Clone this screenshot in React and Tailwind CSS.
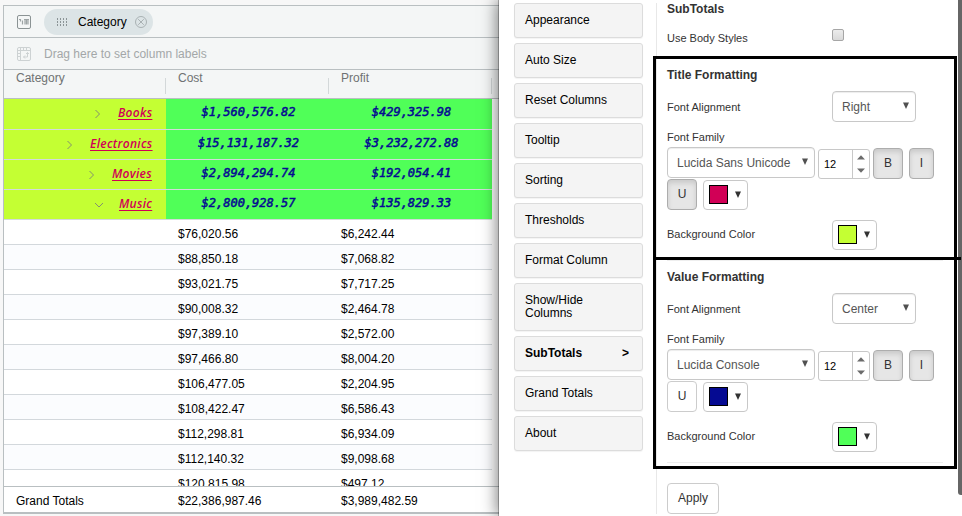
import React from "react";

const subtotals = [
  { name: "Books", cost: "$1,560,576.82", profit: "$429,325.98", gap: "gap-[17px]", width: "w-[35px]" },
  { name: "Electronics", cost: "$15,131,187.32", profit: "$3,232,272.88", gap: "gap-[17px]", width: "w-[63px]" },
  { name: "Movies", cost: "$2,894,294.74", profit: "$192,054.41", gap: "gap-[17px]", width: "w-[41px]" },
  { name: "Music", cost: "$2,800,928.57", profit: "$135,829.33", open: true, gap: "gap-[15px]", width: "w-[34px]" },
];

const rows = [
  ["$76,020.56", "$6,242.44"],
  ["$88,850.18", "$7,068.82"],
  ["$93,021.75", "$7,717.25"],
  ["$90,008.32", "$2,464.78"],
  ["$97,389.10", "$2,572.00"],
  ["$97,466.80", "$8,004.20"],
  ["$106,477.05", "$2,204.95"],
  ["$108,422.47", "$6,586.43"],
  ["$112,298.81", "$6,934.09"],
  ["$112,140.32", "$9,098.68"],
  ["$120,815.98", "$497.12"],
];

const menu = [
  "Appearance",
  "Auto Size",
  "Reset Columns",
  "Tooltip",
  "Sorting",
  "Thresholds",
  "Format Column",
  "Show/Hide Columns",
  "SubTotals",
  "Grand Totals",
  "About",
];

function RowsIcon() {
  return (
    <svg width="14" height="14" viewBox="0 0 14 14" fill="none">
      <rect x="0.5" y="0.5" width="13" height="13" rx="1.5" stroke="#8b9394" />
      <path d="M2 4.500h2M3.500 4.500v2M5.500 9.500v-4M7 4.500h5M8 5v4.500M9.500 5v4.500M11 5v4.500" stroke="#9da4a5" strokeWidth="1.200" />
    </svg>
  );
}

function ColumnsIcon() {
  return (
    <svg width="14" height="14" viewBox="0 0 14 14" fill="none" stroke="#cdd2d3">
      <rect x="0.5" y="0.500" width="13" height="13" rx="1.500" />
      <path d="M0.500 3.500h13M3.500 0.500v13M6.500 1v2.500M9.500 1v2.500M1 6.500h2.500M1 9.500h2.500" />
      <path d="M10.500 5.500v4.500h-4M9 7l1.500-1.500L12 7M8 8.500L6.500 10L8 11.500" />
    </svg>
  );
}

function Header() {
  return (
    <>
      <div className="flex h-[32px] items-center border-b border-[#b9bfc1] pl-[13px]">
        <RowsIcon />
        <div className="ml-[13px] flex h-[26px] w-[109px] items-center rounded-full bg-[#dce4e6] pl-[13px] text-black">
          <svg width="11" height="8" viewBox="0 0 11 8" stroke="#8b9496" strokeDasharray="2 1">
            <path d="M0.500 0v8M3.500 0v8M6.500 0v8M9.500 0v8" />
          </svg>
          <span className="ml-[10px] w-[48px] whitespace-nowrap">Category</span>
          <svg className="ml-[9px]" width="12" height="12" viewBox="0 0 12 12" fill="none" stroke="#a9b1b3">
            <circle cx="6" cy="6" r="5.500" />
            <path d="M3.200 3.200l5.600 5.600M8.800 3.200l-5.600 5.600" />
          </svg>
        </div>
      </div>
      <div className="flex h-[32px] items-center border-b border-[#b9bfc1] pl-[13px]">
        <ColumnsIcon />
        <span className="ml-[13px] text-[#a3a7a8]">Drag here to set column labels</span>
      </div>
      <div className="flex h-[29px] border-b border-[#b9bfc1] leading-[16px] text-[#6f7273]">
        {["Category", "Cost", "Profit"].map((label, i) => (
          <div key={label} className={"flex justify-between pl-[12px] " + (i === 0 ? "w-[162px]" : "w-[163px]")}>
            <span>{label}</span>
            <span className="mt-[8px] h-[16px] w-px bg-[#d3d8d9]" />
          </div>
        ))}
      </div>
    </>
  );
}

function SubtotalRow({ row, first }) {
  return (
    <div className={"flex w-[488px] border-b border-[#d3dadb] " + (first ? "h-[31px]" : "h-[30px]")}>
      <div className={"flex w-[162px] items-center justify-end bg-[#c4ff33] pr-[13px] pb-[2px] " + row.gap}>
        {row.open ? (
          <svg className="mt-[2px]" width="10" height="6" viewBox="0 0 10 6" fill="none" stroke="#82906f">
            <path d="M1 1l4 4l4-4" />
          </svg>
        ) : (
          <svg className="mt-[2px]" width="6" height="10" viewBox="0 0 6 10" fill="none" stroke="#82906f">
            <path d="M0.500 1l4 4l-4 4" />
          </svg>
        )}
        <span className={"whitespace-nowrap font-['Open_Sans',sans-serif] text-[12px] leading-[18px] font-semibold tracking-[0.3px] text-[#d10056] italic underline underline-offset-2 " + row.width}>
          {row.name}
        </span>
      </div>
      <div className="flex flex-1 bg-[#50ff58] font-['DejaVu_Sans_Mono',monospace] text-[12px] leading-[26px] text-[#050a92] italic [-webkit-text-stroke:0.5px_#050a92]">
        <span className="w-[165px] text-center">{row.cost}</span>
        <span className="w-[161px] text-center">{row.profit}</span>
      </div>
    </div>
  );
}

function Grid() {
  return (
    <div className="mt-[5px] ml-[3px] flex h-[509px] w-[496px] flex-col overflow-hidden border-t border-b-2 border-l border-[#b9bfc1] bg-[#f4f6f6]">
      <Header />
      <div className="h-[387px] overflow-hidden bg-white">
        {subtotals.map((row, i) => (
          <SubtotalRow key={row.name} row={row} first={i === 0} />
        ))}
        {rows.map(([cost, profit], i) => (
          <div
            key={cost}
            className={"flex h-[25px] w-[488px] border-b border-[#d3d8dc] pl-[174px] leading-[28px] text-black " + (i % 2 ? "bg-[#fbfcfe]" : "bg-white")}
          >
            <span className="w-[163px]">{cost}</span>
            <span>{profit}</span>
          </div>
        ))}
      </div>
      <div className="flex h-[26px] shrink-0 border-t border-[#b9bfc1] bg-white pl-[12px] leading-[29px] text-black">
        <span className="w-[162px]">Grand Totals</span>
        <span className="w-[163px]">$22,386,987.46</span>
        <span>$3,989,482.59</span>
      </div>
    </div>
  );
}

function Triangle({ className = "" }) {
  return (
    <svg className={className} width="6" height="7" viewBox="0 0 6 7" fill="#333">
      <path d="M0 0.500h6L3 7z" />
    </svg>
  );
}

function Select({ value, wide }) {
  return (
    <div className={"flex h-[31px] items-center justify-between rounded-[4px] border border-[#c8c8c8] bg-white pr-[6px] pl-[9px] text-[#555] shadow-[inset_0_1px_1px_rgba(0,0,0,0.075)] " + (wide ? "w-[148px]" : "w-[84px]")}>
      <span className="whitespace-nowrap">{value}</span>
      <Triangle className="mb-[2px] opacity-85" />
    </div>
  );
}

function Toggle({ label, pressed, narrow }) {
  return (
    <div
      className={
        "flex h-[31px] items-center justify-center rounded-[4px] border pb-px text-[#333] " +
        (narrow ? "w-[25px] " : "w-[30px] ") +
        (pressed ? "border-[#adadad] bg-[#e6e6e6] shadow-[inset_0_3px_5px_rgba(0,0,0,0.125)]" : "border-[#ccc] bg-white")
      }
    >
      {label}
    </div>
  );
}

function Swatch({ color }) {
  return (
    <div className="flex h-[30px] w-[45px] items-center rounded-[4px] border border-[#c8c8c8] bg-white pb-px pl-[5px]">
      <div className={"h-[19px] w-[19px] border border-black " + color} />
      <Triangle className="ml-[7px]" />
    </div>
  );
}

function Stepper() {
  return (
    <div className="mt-[2px] ml-[3px] flex h-[30px] w-[52px] rounded-[3px] border border-[#c8c8c8] bg-white text-black">
      <span className="w-[34px] border-r border-[#c8c8c8] pl-[5px] text-[11px] leading-[29px]">12</span>
      <span className="flex flex-1 flex-col items-center justify-between pt-[5px] pb-[5px]">
        <svg width="8" height="5" viewBox="0 0 8 5" fill="#6b6b6b"><path d="M0 4.500h8L4 0.300z" /></svg>
        <svg width="8" height="5" viewBox="0 0 8 5" fill="#6b6b6b"><path d="M0 0.500h8L4 4.700z" /></svg>
      </span>
    </div>
  );
}

function Formatting({ title, align, font, underline, color, background }) {
  return (
    <section className="flex h-[202px] flex-col text-[11px] text-[#333]">
      <h3 className="h-[32px] text-[12px] leading-[32px] font-bold">{title}</h3>
      <div className="flex items-center text-[12px]">
        <span className="w-[165px] pt-[2px] text-[11px]">Font Alignment</span>
        <Select value={align} />
      </div>
      <div className="h-[25px] pt-[3px] leading-[25px]">Font Family</div>
      <div className="flex h-[32px] text-[12px]">
        <Select value={font} wide />
        <Stepper />
        <div className="mt-px ml-[3px] flex gap-[6px]">
          <Toggle label="B" pressed />
          <Toggle label="I" pressed narrow />
        </div>
      </div>
      <div className="flex items-end gap-[6px] text-[12px]">
        <Toggle label="U" pressed={underline} />
        <Swatch color={color} />
      </div>
      <div className="mt-[10px] flex items-center">
        <span className="w-[165px] pb-[2px]">Background Color</span>
        <Swatch color={background} />
      </div>
      <div className="mt-[10px] h-px w-[276px] bg-[#eee]" />
    </section>
  );
}

function Menu() {
  return (
    <nav className="flex w-[129px] shrink-0 flex-col gap-[5px] pt-[3px] text-black">
      {menu.map((label) => {
        const active = label === "SubTotals";
        return (
          <div
            key={label}
            className={
              "flex items-center justify-between rounded-[3px] border border-[#dcdcdc] bg-[#f4f4f4] pr-[13px] pl-[10px] leading-[13px] shadow-[0_1px_1px_rgba(0,0,0,0.05)] " +
              (label === "Show/Hide Columns" ? "h-[48px] pr-[40px] " : "h-[35px] ") +
              (active ? "font-bold" : "")
            }
          >
            <span>{label}</span>
            {active && <span>&gt;</span>}
          </div>
        );
      })}
    </nav>
  );
}

export default function App() {
  return (
    <div className="relative flex h-[516px] w-[962px] overflow-hidden bg-[#f7f7f7] font-['Liberation_Sans',Arial,sans-serif] text-[12px]">
      <div className="w-[499px] shrink-0">
        <Grid />
      </div>
      <aside className="z-10 flex h-[516px] w-[463px] bg-white pl-[15px] shadow-[-1px_0_0_rgba(0,0,0,0.25),-2px_0_15px_rgba(0,0,0,0.5)]">
        <Menu />
        <div className="mt-[3px] ml-[13px] h-[511px] w-[302px] overflow-hidden border-l border-[#e8e8e8] pl-[10px]">
          <h3 className="h-[20px] leading-[13px] font-bold text-[#333]">SubTotals</h3>
          <div className="flex h-[36px] text-[11px] text-[#333]">
            <span className="w-[165px] pt-[7px]">Use Body Styles</span>
            <span className="mt-[6px] h-[12px] w-[12px] rounded-[2px] border border-[#a6a6a6] bg-linear-to-b from-[#ececec] to-[#d9d9d9]" />
          </div>
          <Formatting title="Title Formatting" align="Right" font="Lucida Sans Unicode" underline color="bg-[#d10056]" background="bg-[#c4ff33]" />
          <Formatting title="Value Formatting" align="Center" font="Lucida Console" color="bg-[#050a92]" background="bg-[#50ff58]" />
          <div className="mt-[20px] flex h-[31px] w-[52px] items-center justify-center rounded-[4px] border border-[#ccc] bg-white pb-px text-[#333]">
            Apply
          </div>
        </div>
        <div className="h-[495px] w-[4px] rounded-bl-[3px] bg-[#666]" />
      </aside>
      {/* Callout frames over the two formatting sections */}
      <div className="absolute top-[56px] left-[653px] z-20 h-[413px] w-[304px] border-[3px] border-black" />
      <div className="absolute top-[257px] left-[653px] z-20 h-[3px] w-[308px] bg-black" />
    </div>
  );
}
